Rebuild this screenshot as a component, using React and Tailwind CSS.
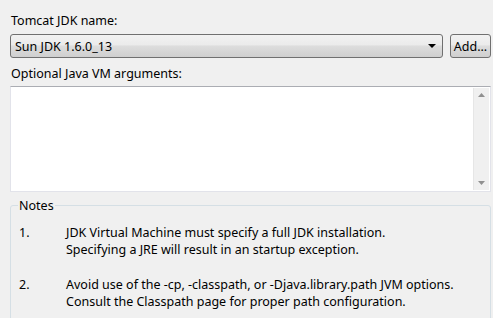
const Arrow = ({ up }) => (
  <svg width="7" height="4" viewBox="0 0 7 4" className="block">
    {up ? <path d="M3.5 0L7 4H0z" fill="#909090" /> : <path d="M0 0h7L3.5 4z" fill="#909090" />}
  </svg>
);

const notes = [
  ["JDK Virtual Machine must specify a full JDK installation.", "Specifying a JRE will result in an startup exception."],
  ["Avoid use of the -cp, -classpath, or -Djava.library.path JVM options.", "Consult the Classpath page for proper path configuration."],
];

const App = () => {
  return (
    <div
      className="w-[493px] h-[318px] overflow-hidden bg-[#f0f0f0] text-[12.5px] text-black leading-[17px] pl-[10px] pr-[2px]"
      style={{ fontFamily: '"Noto Sans", "DejaVu Sans", sans-serif' }}
    >
      <div className="pt-[12px] pl-[1px]">Tomcat JDK name:</div>
      <div className="flex mt-[5px] h-[24px]">
        <div className="flex-1 flex items-center justify-between rounded-[3px] border border-[#707070] bg-[linear-gradient(#f2f2f2_0%,#ebebeb_45%,#dddddd_50%,#cfcfcf_100%)] pl-[4px] pr-[6px]">
          <span>Sun JDK 1.6.0_13</span>
          <svg width="8" height="4" viewBox="0 0 8 4"><path d="M0 0h8L4 4z" fill="#000" /></svg>
        </div>
        <button className="ml-[7px] w-[41px] rounded-[3px] border border-[#707070] bg-[linear-gradient(#f2f2f2_0%,#ebebeb_45%,#dddddd_50%,#cfcfcf_100%)] text-center">
          Add...
        </button>
      </div>
      <div className="mt-[7px] pl-[1px]">Optional Java VM arguments:</div>
      <div className="mt-[4px] h-[106px] flex bg-white border border-[#e2e3ea] border-t-[#abadb3] pr-[1px] pt-[1px] pb-[1px]">
        <div className="flex-1" />
        <div className="w-[16px] flex flex-col items-center justify-between bg-[#f0f0f0] border-l border-[#e6e6e6] py-[5px]">
          <Arrow up />
          <Arrow />
        </div>
      </div>
      <fieldset className="mt-[5px] border border-[#d5dfe5] rounded-[3px] pl-[8px] pr-[8px] h-[140px]">
        <legend className="px-[1px] ml-[-1px]">Notes</legend>
        <div className="mt-[10px]">
          {notes.map((n, i) => (
            <div key={i} className={`flex ${i > 0 ? "mt-[18px]" : ""}`}>
              <div className="w-[47px] shrink-0">{i + 1}.</div>
              <div>
                <div>{n[0]}</div>
                <div>{n[1]}</div>
              </div>
            </div>
          ))}
        </div>
      </fieldset>
    </div>
  );
};

export default App;
